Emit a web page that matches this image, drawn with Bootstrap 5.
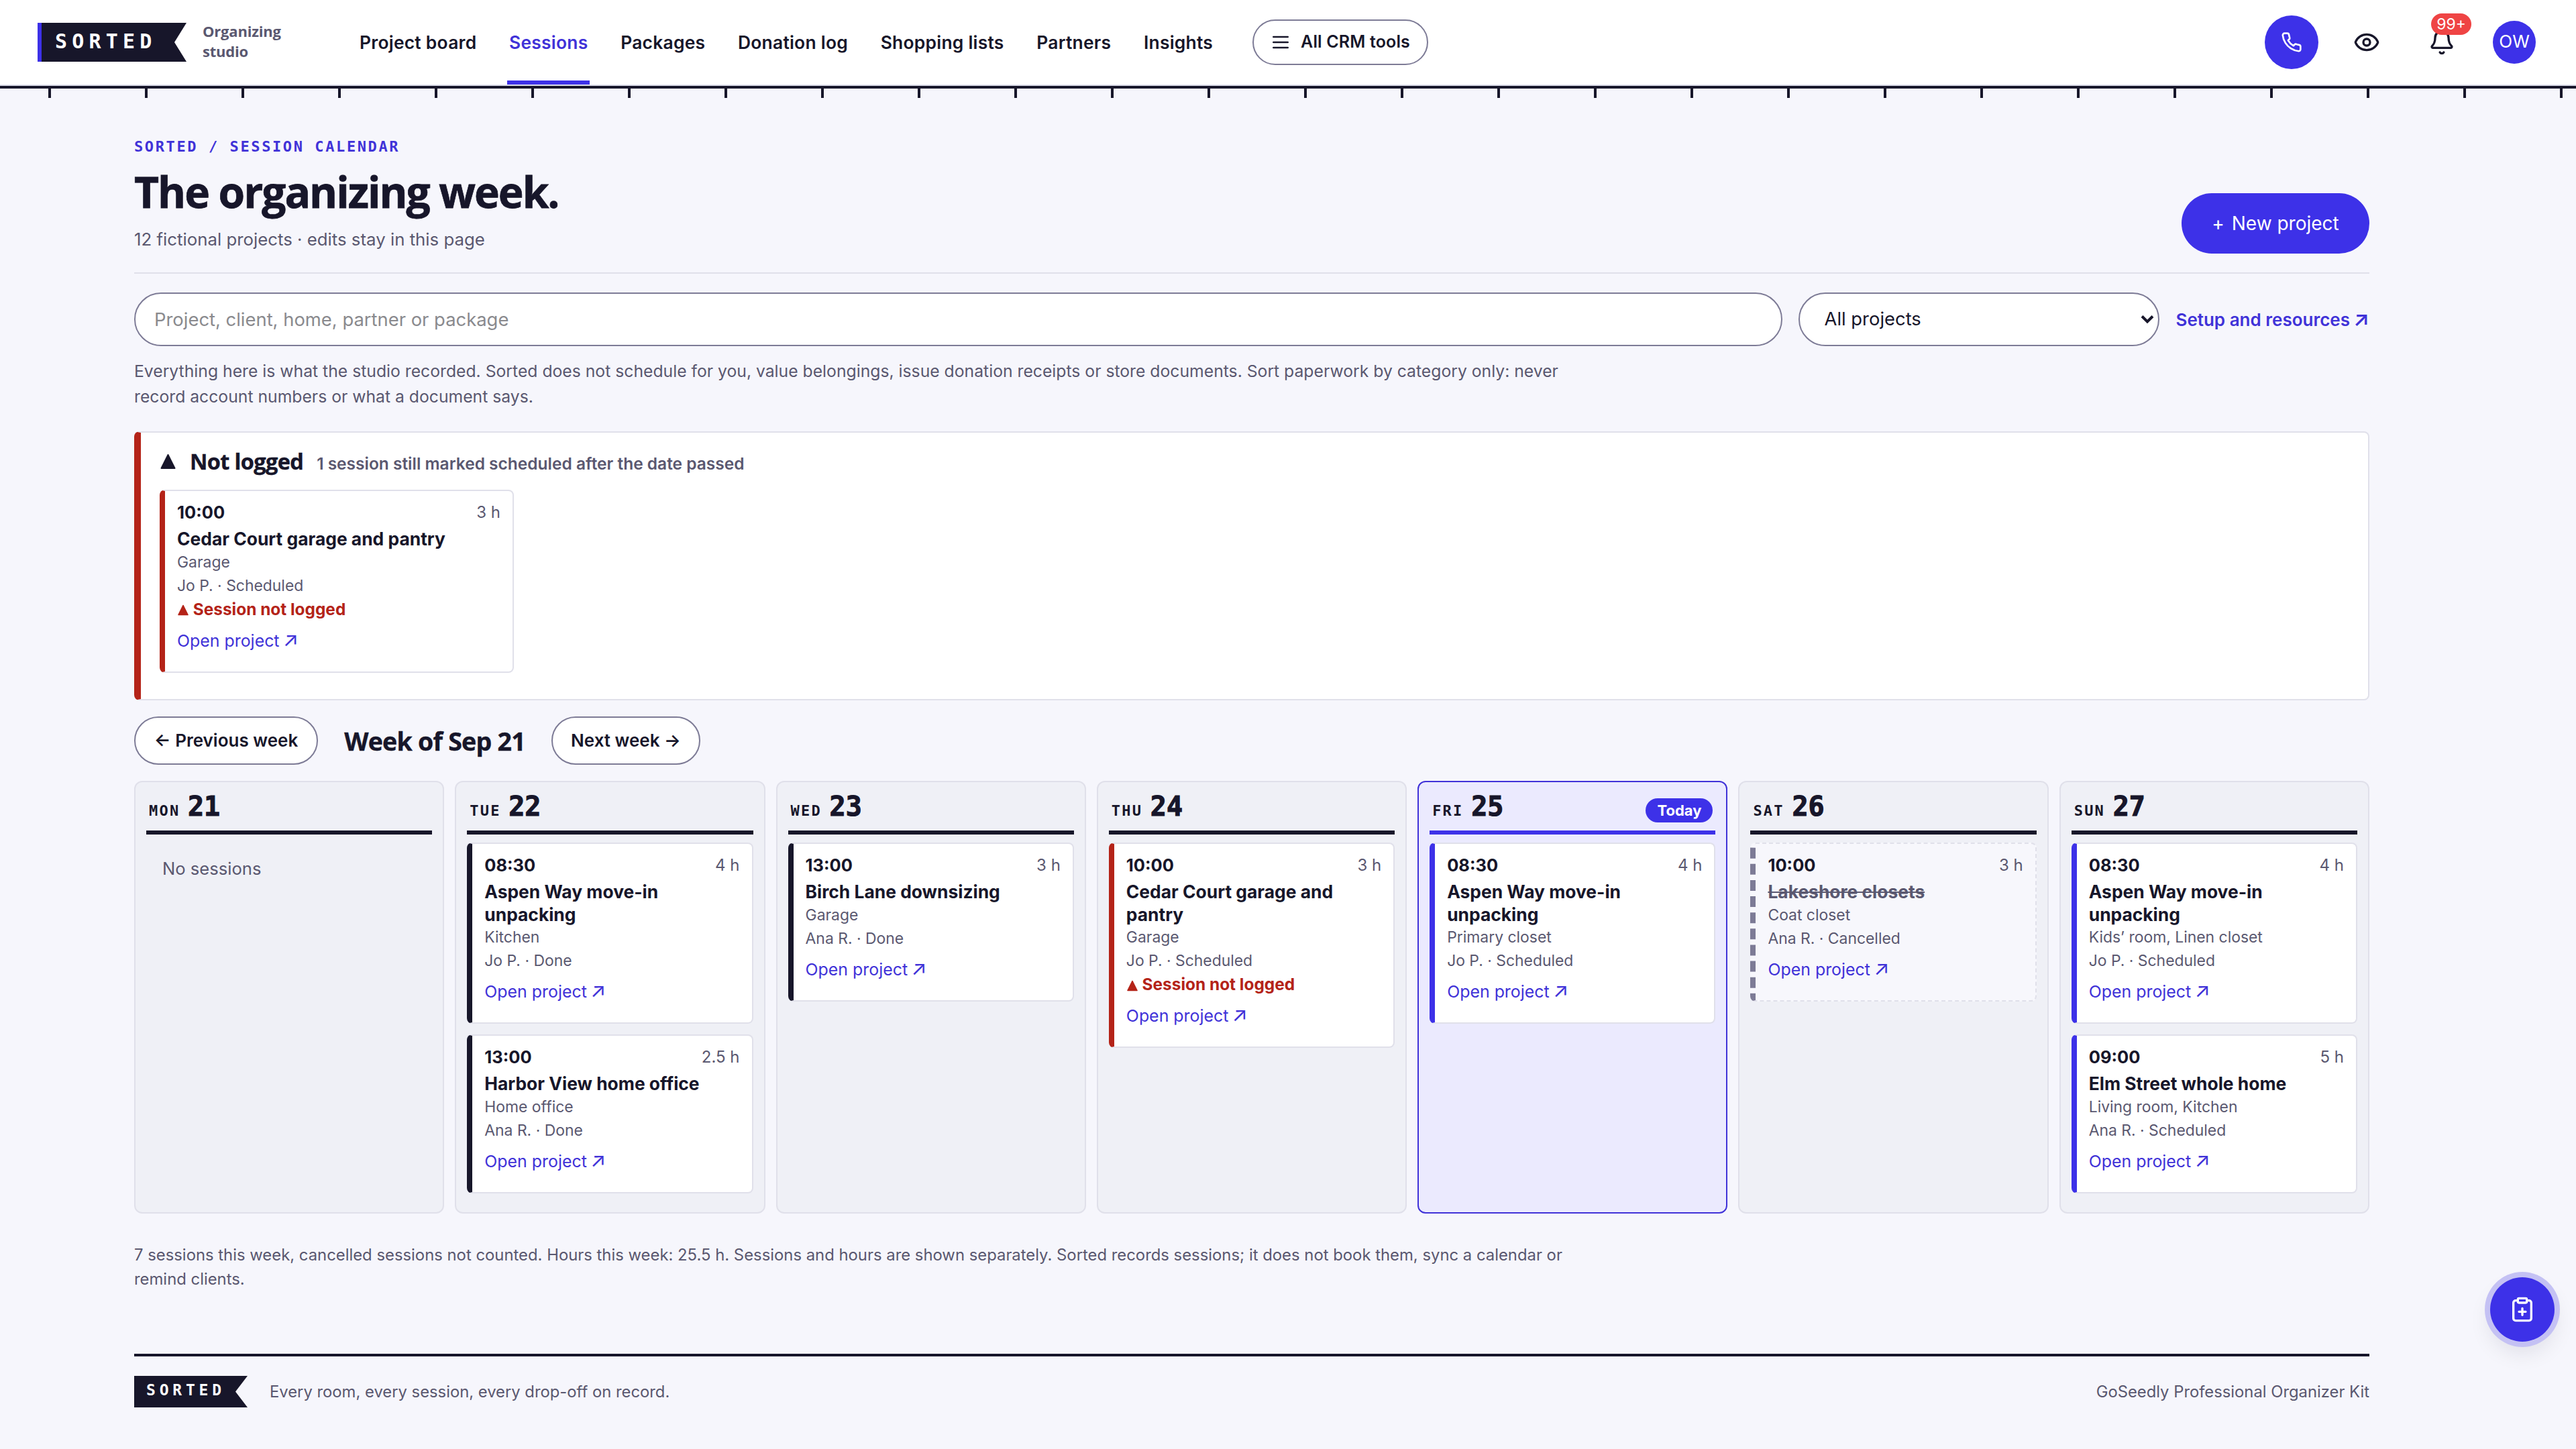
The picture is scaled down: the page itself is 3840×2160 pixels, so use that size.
<!DOCTYPE html>
<html lang="en">
<head>
<meta charset="utf-8">
<title>Sorted - Session calendar</title>
<link rel="stylesheet" href="https://cdn.jsdelivr.net/npm/bootstrap@5.3.0/dist/css/bootstrap.min.css">
<style>
:root{--ink:#17162a;--blue:#3d31e8;--link:#4032d8;--muted:#5a5870;--line:#e0e0ea;--edge:#7d7b96;--red:#b42318}
body{background:#f6f6fc;color:var(--ink);font-family:Inter,sans-serif;font-size:26px;line-height:1.5;min-height:2160px}
a{text-decoration:none}
.display-face{font-family:"Open Sans",sans-serif;font-weight:700;letter-spacing:-.02em;-webkit-text-stroke:.012em currentColor}
.mono-face{font-family:"DejaVu Sans Mono",monospace;font-weight:700}
.topbar{height:132px;padding:0 60px 2px 56px;background:#fff;border-bottom:4px solid var(--ink);box-shadow:inset 0 -2px #dddeea}
.ticks{height:14px;background:repeating-linear-gradient(90deg,transparent 0 72px,var(--ink) 72px 76px,transparent 76px 144px)}
.tag-logo{background:var(--ink);color:#fff;clip-path:polygon(0 0,100% 0,calc(100% - 18px) 50%,100% 100%,0 100%)}
.tag-top{width:222px;height:58px;border-left:6px solid var(--blue);padding-left:20px;font-size:30px;line-height:55px;letter-spacing:7.2px}
.tag-foot{width:169px;height:47px;padding-left:18px;font-size:23px;line-height:42px;letter-spacing:5.8px}
.tagline{margin:-4px 0 0 24px;width:231px;font-size:22px;letter-spacing:-.2px;line-height:30px;color:var(--muted);font-weight:700;font-family:"Open Sans",sans-serif}
.main-links{gap:42.7px}
.main-links a{height:126px;line-height:126px;padding:0 3px;font-weight:600;font-size:26.4px;letter-spacing:.25px;color:var(--ink);white-space:nowrap}
.main-links a.current{color:var(--link);box-shadow:inset 0 -6px var(--blue)}
.pill{border:2px solid var(--edge);border-radius:50px;background:#fff;color:var(--ink);font-weight:600;white-space:nowrap}
.tools-btn{height:68px;width:262px;margin-left:56px;font-size:25px;letter-spacing:.15px;padding:0 0 0 24px;gap:14px}
.round-btn{width:80px;height:80px;background:var(--blue)}
.avatar{width:64px;height:64px;background:var(--blue);color:#fff;font-size:26px;line-height:61px}
.count{left:3624px;top:20px;width:60px;height:32px;border-radius:16px;background:#ef4444;color:#fff;font-size:23px;line-height:32px;text-align:center}
.sheet{width:3332px;margin-left:200px}
.eyebrow{font-size:22px;letter-spacing:2.6px;line-height:32px;color:var(--link);margin-top:57px}
.headline{font-size:64px;line-height:72px;margin:15px 0 0;letter-spacing:-2px}
.sub{line-height:40px;margin-top:15px;color:var(--muted);font-size:25.8px}
.new-btn{width:280px;height:90px;border-radius:45px;background:var(--blue);color:#fff;font-size:28px;gap:11px;position:relative;top:1px}
.rule{height:2px;background:var(--line)}
.filters{gap:24px;margin-top:28px}
.filters input,.filters select{height:80px;border:2px solid var(--edge);border-radius:40px;background-color:#fff;font-size:27.4px;color:var(--ink)}
.filters input{width:2458px;padding:0 28px}
.filters input::placeholder{color:#8a8a8e}
.filters select{width:538px;padding:0 0 0 36px;appearance:none}
.caret{right:8px;top:33px}
.arr{font-size:1.2em;line-height:0;margin-left:-.06em}
.note{font-size:24.72px;line-height:37.5px;color:var(--muted);max-width:2160px}
.note-low{font-size:23.85px;line-height:36px}
.alert-panel{margin-top:33px;height:401px;border:2px solid var(--line);border-left:10px solid var(--red);border-radius:8px;background:#fff;padding:19px 28px 0}
.slot{background:#fff;border:2px solid var(--line);border-left:8px solid var(--ink);border-radius:8px;padding:13px 18px 18px 18px}
.slot .when{line-height:38px;font-size:25.5px;font-weight:700}
.slot .hrs{font-size:24px;font-weight:400;color:var(--muted)}
.slot .name{font-size:26.4px;line-height:33.5px;font-weight:700;margin-top:4px}
.slot .meta{font-size:22.9px;line-height:35px;color:var(--muted)}
.slot .warn{font-size:24.4px;line-height:35px;font-weight:700;color:var(--red)}
.slot .open{display:block;font-size:24.9px;line-height:55px;margin-top:1px;color:var(--link)}
.slot .warn + .open{margin-top:2px}
.slot.plan{border-left-color:var(--blue)}
.slot.late{border-left-color:var(--red)}
.slot.off{border-style:dashed;border-left-color:var(--edge);background:#f7f7fc}
.slot.off .name{color:var(--muted);text-decoration:line-through}
.week-btn{height:72px;font-size:26px;line-height:67px;text-align:center}
.board{display:grid;grid-template-columns:repeat(7,minmax(0,1fr));gap:16px;margin-top:24px}
.day{height:645px;border:2px solid var(--line);border-radius:12px;background:#eff0f6;padding:0 16px}
.day.now{border-color:var(--link);background:#ebeafe}
.day-head{height:78px;padding:6px 4px 0;border-bottom:6px solid var(--ink);margin-bottom:12px}
.now .day-head{border-color:var(--blue)}
.dow{font-size:22px;letter-spacing:2.2px;width:58px}
.num{font-size:40px;line-height:60px;-webkit-text-stroke:1.2px currentColor}
.today{height:36px;width:100px;border-radius:18px;background:var(--blue);color:#fff;font-size:22px;font-weight:700;line-height:36px;text-align:center}
.foot{border-top:4px solid var(--ink);margin-top:93px;padding-top:29px;font-size:23.8px;color:var(--muted)}
.fab{position:fixed;left:3712px;top:1904px;width:96px;height:96px;background:var(--blue);box-shadow:0 0 0 8px #c4c1f4,0 16px 32px rgba(23,22,42,.1)}
.ic{fill:none;stroke:currentColor;stroke-width:2;stroke-linecap:round;stroke-linejoin:round}
.tri{fill:currentColor;stroke:currentColor;stroke-width:2;stroke-linejoin:round}
</style>
</head>
<body>
<header class="topbar d-flex align-items-center position-relative">
  <div class="tag-logo tag-top mono-face">SORTED</div>
  <div class="tagline"><div>Organizing</div><div>studio</div></div>
  <nav class="main-links d-flex align-items-start align-self-start">
    <a href="#">Project board</a><a href="#" class="current">Sessions</a><a href="#">Packages</a><a href="#">Donation log</a><a href="#">Shopping lists</a><a href="#">Partners</a><a href="#">Insights</a>
  </nav>
  <a href="#" class="pill tools-btn d-flex align-items-center"><svg class="ic" width="32" height="32" viewBox="0 0 24 24"><path d="M4 6h16M4 12h16M4 18h16"/></svg>All CRM tools</a>
  <div class="d-flex align-items-center ms-auto">
    <div class="round-btn rounded-circle text-white d-flex align-items-center justify-content-center"><svg class="ic" width="32" height="32" viewBox="0 0 24 24"><path d="M22 16.92v3a2 2 0 0 1-2.18 2 19.79 19.79 0 0 1-8.63-3.07 19.5 19.5 0 0 1-6-6 19.79 19.79 0 0 1-3.07-8.67A2 2 0 0 1 4.11 2h3a2 2 0 0 1 2 1.72 12.84 12.84 0 0 0 .7 2.81 2 2 0 0 1-.45 2.11L8.09 9.91a16 16 0 0 0 6 6l1.27-1.27a2 2 0 0 1 2.11-.45 12.84 12.84 0 0 0 2.81.7A2 2 0 0 1 22 16.92z"/></svg></div>
    <svg class="ic" style="margin-left:52px" width="40" height="40" viewBox="0 0 24 24"><path d="M2.062 12.348a1 1 0 0 1 0-.696 10.75 10.75 0 0 1 19.876 0 1 1 0 0 1 0 .696 10.75 10.75 0 0 1-19.876 0"/><circle cx="12" cy="12" r="3"/></svg>
    <svg class="ic" style="margin-left:72px" width="40" height="40" viewBox="0 0 24 24"><path d="M10.268 21a2 2 0 0 0 3.464 0M3.262 15.326A1 1 0 0 0 4 17h16a1 1 0 0 0 .74-1.673C19.41 13.956 18 12.499 18 8A6 6 0 0 0 6 8c0 4.499-1.411 5.956-2.738 7.326"/></svg>
    <div class="avatar rounded-circle text-center" style="margin-left:56px">OW</div>
  </div>
  <span class="count position-absolute">99+</span>
</header>
<div class="ticks"></div>

<main class="sheet">
  <div class="d-flex justify-content-between align-items-end">
    <div>
      <div class="eyebrow mono-face">SORTED / SESSION CALENDAR</div>
      <h1 class="headline display-face">The organizing week.</h1>
      <div class="sub">12 fictional projects · edits stay in this page</div>
    </div>
    <a href="#" class="new-btn d-flex align-items-center justify-content-center"><span>+</span><span>New project</span></a>
  </div>
  <div class="rule" style="margin-top:29px"></div>
  <div class="filters d-flex align-items-center">
    <input type="text" placeholder="Project, client, home, partner or package">
    <div class="position-relative"><select class="d-block"><option>All projects</option></select><svg class="caret position-absolute" width="20" height="14" viewBox="0 0 20 14" fill="none" stroke="#17162a" stroke-width="4"><path d="M2 2.5l8 8 8-8"/></svg></div>
    <a href="#" class="fw-semibold text-nowrap" style="color:var(--link);font-size:26px">Setup and resources <span class="arr">↗</span></a>
  </div>
  <p class="note mb-0" style="margin-top:19px">Everything here is what the studio recorded. Sorted does not schedule for you, value belongings, issue donation receipts or store documents. Sort paperwork by category only: never record account numbers or what a document says.</p>

  <section class="alert-panel">
    <div class="d-flex align-items-baseline" style="height:66px">
      <svg width="25" height="24" viewBox="0 0 24 24" class="tri"><path d="M12 2 22 22H2z"/></svg>
      <span class="display-face" style="font-size:32.5px;margin-left:20px">Not logged</span>
      <span class="fw-semibold" style="font-size:24.5px;margin-left:20px;color:var(--muted)">1 session still marked scheduled after the date passed</span>
    </div>
    <div class="slot late" style="width:528px">
      <div class="when d-flex justify-content-between"><span>10:00</span><span class="hrs">3 h</span></div>
      <div class="name">Cedar Court garage and pantry</div>
      <div class="meta">Garage</div><div class="meta">Jo P. · Scheduled</div>
      <div class="warn"><svg width="18" height="17" viewBox="0 0 24 24" class="tri"><path d="M12 2 22 22H2z"/></svg> Session not logged</div>
      <a class="open" href="#">Open project <span class="arr">↗</span></a>
    </div>
  </section>

  <div class="d-flex align-items-center" style="margin-top:24px">
    <a href="#" class="pill week-btn" style="width:274px">← Previous week</a>
    <h2 class="display-face mb-0 text-center" style="width:348px;font-size:37.5px">Week of Sep 21</h2>
    <a href="#" class="pill week-btn" style="width:222px">Next week →</a>
  </div>

  <div class="board">
    <div class="day"><div class="day-head d-flex align-items-baseline"><span class="dow mono-face">MON</span><span class="num mono-face">21</span></div>
      <div style="padding:20px 24px;color:var(--muted);font-size:25.6px">No sessions</div></div>
    <div class="day"><div class="day-head d-flex align-items-baseline"><span class="dow mono-face">TUE</span><span class="num mono-face">22</span></div>
      <div class="slot"><div class="when d-flex justify-content-between"><span>08:30</span><span class="hrs">4 h</span></div><div class="name">Aspen Way move-in unpacking</div><div class="meta">Kitchen</div><div class="meta">Jo P. · Done</div><a class="open" href="#">Open project <span class="arr">↗</span></a></div>
      <div class="slot mt-3"><div class="when d-flex justify-content-between"><span>13:00</span><span class="hrs">2.5 h</span></div><div class="name">Harbor View home office</div><div class="meta">Home office</div><div class="meta">Ana R. · Done</div><a class="open" href="#">Open project <span class="arr">↗</span></a></div></div>
    <div class="day"><div class="day-head d-flex align-items-baseline"><span class="dow mono-face">WED</span><span class="num mono-face">23</span></div>
      <div class="slot"><div class="when d-flex justify-content-between"><span>13:00</span><span class="hrs">3 h</span></div><div class="name">Birch Lane downsizing</div><div class="meta">Garage</div><div class="meta">Ana R. · Done</div><a class="open" href="#">Open project <span class="arr">↗</span></a></div></div>
    <div class="day"><div class="day-head d-flex align-items-baseline"><span class="dow mono-face">THU</span><span class="num mono-face">24</span></div>
      <div class="slot late"><div class="when d-flex justify-content-between"><span>10:00</span><span class="hrs">3 h</span></div><div class="name">Cedar Court garage and pantry</div><div class="meta">Garage</div><div class="meta">Jo P. · Scheduled</div><div class="warn"><svg width="18" height="17" viewBox="0 0 24 24" class="tri"><path d="M12 2 22 22H2z"/></svg> Session not logged</div><a class="open" href="#">Open project <span class="arr">↗</span></a></div></div>
    <div class="day now"><div class="day-head d-flex align-items-baseline"><span class="dow mono-face">FRI</span><span class="num mono-face">25</span><span class="today ms-auto">Today</span></div>
      <div class="slot plan"><div class="when d-flex justify-content-between"><span>08:30</span><span class="hrs">4 h</span></div><div class="name">Aspen Way move-in unpacking</div><div class="meta">Primary closet</div><div class="meta">Jo P. · Scheduled</div><a class="open" href="#">Open project <span class="arr">↗</span></a></div></div>
    <div class="day"><div class="day-head d-flex align-items-baseline"><span class="dow mono-face">SAT</span><span class="num mono-face">26</span></div>
      <div class="slot off"><div class="when d-flex justify-content-between"><span>10:00</span><span class="hrs">3 h</span></div><div class="name">Lakeshore closets</div><div class="meta">Coat closet</div><div class="meta">Ana R. · Cancelled</div><a class="open" href="#">Open project <span class="arr">↗</span></a></div></div>
    <div class="day"><div class="day-head d-flex align-items-baseline"><span class="dow mono-face">SUN</span><span class="num mono-face">27</span></div>
      <div class="slot plan"><div class="when d-flex justify-content-between"><span>08:30</span><span class="hrs">4 h</span></div><div class="name">Aspen Way move-in unpacking</div><div class="meta">Kids’ room, Linen closet</div><div class="meta">Jo P. · Scheduled</div><a class="open" href="#">Open project <span class="arr">↗</span></a></div>
      <div class="slot plan mt-3"><div class="when d-flex justify-content-between"><span>09:00</span><span class="hrs">5 h</span></div><div class="name">Elm Street whole home</div><div class="meta">Living room, Kitchen</div><div class="meta">Ana R. · Scheduled</div><a class="open" href="#">Open project <span class="arr">↗</span></a></div></div>
  </div>

  <p class="note note-low mb-0" style="margin-top:44px">7 sessions this week, cancelled sessions not counted. Hours this week: 25.5 h. Sessions and hours are shown separately. Sorted records sessions; it does not book them, sync a calendar or remind clients.</p>

  <footer class="foot d-flex align-items-center">
    <div class="tag-logo tag-foot mono-face">SORTED</div>
    <span style="margin-left:33px">Every room, every session, every drop-off on record.</span>
    <span class="ms-auto">GoSeedly Professional Organizer Kit</span>
  </footer>
</main>
<a href="#" class="fab rounded-circle text-white d-flex align-items-center justify-content-center"><svg class="ic" width="40" height="40" viewBox="0 0 24 24"><rect x="8" y="2" width="8" height="4" rx="1"/><path d="M16 4h2a2 2 0 0 1 2 2v14a2 2 0 0 1-2 2H6a2 2 0 0 1-2-2V6a2 2 0 0 1 2-2h2M9 14h6M12 17v-6"/></svg></a>
<script src="https://cdn.jsdelivr.net/npm/bootstrap@5.3.0/dist/js/bootstrap.bundle.min.js"></script>
</body>
</html>
